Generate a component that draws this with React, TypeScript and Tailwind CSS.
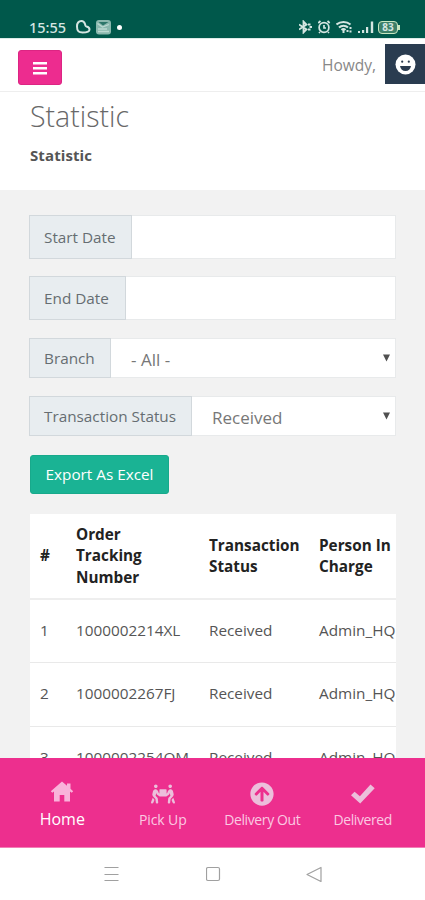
import React from "react";
import { FaArrowCircleUp, FaPeopleCarry } from "react-icons/fa";

const rows = [
  { id: 1, tracking: "1000002214XL", status: "Received", person: "Admin_HQ" },
  { id: 2, tracking: "1000002267FJ", status: "Received", person: "Admin_HQ" },
  { id: 3, tracking: "1000002254QM", status: "Received", person: "Admin_HQ" },
];

const StatusBar = () => (
  <div className="h-[38px] shrink-0 bg-[#00584b] flex items-end justify-between pl-[29px] pr-[25px] pb-[3px] text-[#d5e6e2]">
    <div className="flex items-center">
      <span className="w-[38px] font-['Noto_Sans','Open_Sans',sans-serif] text-[14.5px] leading-[15px] font-medium whitespace-nowrap">
        15:55
      </span>
      <svg className="ml-[7px]" width="17" height="16" viewBox="0 0 17 16" fill="none" stroke="currentColor" strokeWidth="2">
        <path d="M7.500 2C4.500 2 3 4 3 7.500C3 12 4.500 13.500 8.500 13.500C12.500 13.500 15.500 13 15.500 10.500C15.500 8.500 14.500 8 12.500 7.500C11 7 11.500 6.500 11 5C10.300 3 9.500 2 7.500 2Z" />
      </svg>
      <svg className="ml-[4px]" width="17" height="16" viewBox="0 0 17 16">
        <rect x="1" y="1" width="15" height="14.500" rx="3" fill="#8ab8ae" />
        <path d="M2.500 4.500L7.500 8L14 5.500M3 12.500H14M3 10H12" stroke="#bcd9d2" strokeWidth="1.300" fill="none" />
        <path d="M3.500 3H13.500L8 6.500Z" fill="#2c7569" />
      </svg>
      <span className="ml-[5px] size-[5px] rounded-full bg-white" />
    </div>
    <div className="flex items-center gap-[5px] pb-px">
      <svg className="-mr-px" width="15" height="14" viewBox="0 0 15 14" fill="none" stroke="currentColor" strokeWidth="1.800">
        <path d="M0 4.500L7.500 9.500L4.500 12.500V1.500L7.500 4.500L0 9.500" />
        <path d="M9 4.500H11.500M9 9.500H11.500M10.500 7H13" strokeWidth="2" />
      </svg>
      <svg className="-mr-px" width="14" height="14" viewBox="0 0 14 14" fill="none" stroke="currentColor" strokeWidth="1.700">
        <circle cx="6" cy="7.500" r="4.900" />
        <path d="M6 5V8H8M0.300 3L2.500 1M11.700 3L9.500 1M2 12L1 13M10 12L11 13" />
      </svg>
      <svg width="17" height="14" viewBox="0 0 17 14" fill="none" stroke="currentColor" strokeWidth="2">
        <path d="M0.500 4.500C4.500 1 10.500 1 14.500 4.500M3 7.500C5.500 5 9.500 5 12 7.500M5.500 10C7 8.500 8 8.500 9.500 10" />
        <path d="M7.500 10V13M11.500 10V12M14.500 7V9M14.500 10.500V12.500" />
      </svg>
      <svg width="17" height="14" viewBox="0 0 17 14" fill="currentColor">
        <path d="M0 11h2v2H0zM4 10h2.200V13H4zM8 7h2.200v6H8zM12.800 1.500h2.400v11.500h-2.400z" />
      </svg>
      <div className="relative -ml-[2px] mr-[2px] flex h-[13px] w-[20px] items-center justify-center rounded-[4px] border-[1.5px] border-[#c8e6c0] bg-[#3d8069] font-['Open_Sans',sans-serif] text-[10px] font-bold leading-none">
        83
        <span className="absolute -right-[3px] top-[3px] h-[5px] w-[2px] bg-[#c8e6c0]" />
      </div>
    </div>
  </div>
);

const Navbar = () => (
  <div className="h-[54px] shrink-0 bg-white border-t border-t-[#dcebe8] border-b border-b-[#eeeeee] flex justify-between">
    <button className="mt-[11px] ml-[18px] w-[44px] h-[35px] rounded-[3px] bg-[#ed2c8f] border border-[#dc2583] text-white flex items-center justify-center">
      <svg width="14" height="14" viewBox="0 0 14 14" fill="currentColor">
        <path d="M0 1h14v2.500H0zM0 6h14v2.500H0zM0 11h14v2.500H0z" />
      </svg>
    </button>
    <div className="flex">
      <span className="mt-[15px] mr-[9px] text-[15.5px] leading-[22px] text-[#888888]">Howdy,</span>
      <div className="mt-[5px] size-[40px] bg-[#2a3c50] flex items-center justify-center">
        <svg width="21" height="21" viewBox="0 0 21 21">
          <circle cx="10.500" cy="10.500" r="10" fill="#fff" />
          <circle cx="7.200" cy="7.700" r="1.100" fill="#2a3c50" />
          <circle cx="13.800" cy="7.700" r="1.100" fill="#2a3c50" />
          <path d="M5 12H16C15.500 15 13.500 17 10.500 17C7.500 17 5.500 15 5 12Z" fill="#2a3c50" />
        </svg>
      </div>
    </div>
  </div>
);

type FieldProps = {
  label: string;
  value?: string;
  select?: boolean;
  labelClass: string;
  className: string;
  valueClass?: string;
};

const Field = ({ label, value, select, labelClass, className, valueClass }: FieldProps) => (
  <div className={`flex ${className}`}>
    <div
      className={`shrink-0 border border-[#d2d8dc] bg-[#e8edf0] pl-[14px] flex items-center text-[15.3px] text-[#666d72] whitespace-nowrap ${labelClass}`}
    >
      {label}
    </div>
    <div className="flex-1 flex items-center justify-between bg-white border-y border-r border-[#e8eaeb]">
      <span className={`text-[17px] leading-5 text-[#777777] ${valueClass ?? ""}`}>{value}</span>
      {select && (
        <svg className="mr-[5px] mb-px" width="7" height="8" viewBox="0 0 7 8">
          <path d="M0 0.500H7L3.500 7.500Z" fill="#505050" />
        </svg>
      )}
    </div>
  </div>
);

const Table = () => (
  <div className="mt-[20px] ml-[30px] w-[366px] overflow-hidden bg-white">
    <table className="w-[366px] table-fixed border-collapse text-left text-[15.3px] whitespace-nowrap">
      <colgroup>
        <col className="w-[37px]" />
        <col className="w-[132px]" />
        <col className="w-[111px]" />
        <col className="w-[86px]" />
      </colgroup>
      <thead>
        <tr className="h-[85px] border-b-2 border-[#eeeeee] text-[#222222] leading-[21.5px]">
          <th className="pl-[10px] font-bold">#</th>
          <th className="pl-[9px] font-bold">
            Order
            <br />
            Tracking
            <br />
            Number
          </th>
          <th className="pl-[10px] font-bold">
            Transaction
            <br />
            Status
          </th>
          <th className="pl-[9px] font-bold">
            Person In
            <br />
            Charge
          </th>
        </tr>
      </thead>
      <tbody>
        {rows.map((row) => (
          <tr key={row.id} className="h-[63.5px] border-b border-[#e9e9e9] text-[#555555]">
            <td className="pl-[10px] pb-px">{row.id}</td>
            <td className="pl-[9px] pb-px">{row.tracking}</td>
            <td className="pl-[10px] pb-px">{row.status}</td>
            <td className="pl-[9px] pb-px">{row.person}</td>
          </tr>
        ))}
      </tbody>
    </table>
  </div>
);

const BottomNav = () => (
  <div className="h-[90px] shrink-0 bg-[#ed2f8e] border-b border-[#f17fb6] pl-[12px] pr-[11px] flex text-[#fbc9e2] text-[14px] leading-5 tracking-[-0.4px] whitespace-nowrap">
    <div className="w-[101px] flex flex-col items-center pt-[22px]">
      <svg width="24" height="24" viewBox="0 0 24 24" fill="#f9b3da">
        <path d="M12 1.500L0.800 11.200L2.300 12.800L4 11.500V21.500H9.700V15H14.300V21.500H20V11.500L21.700 12.800L23.200 11.200L20.500 8.800V3.500H17V5.800Z" />
      </svg>
      <span className="mt-[5px] text-[16px] font-medium tracking-normal text-white">Home</span>
    </div>
    <div className="w-[101px] flex flex-col items-center pt-[24px]">
      <FaPeopleCarry size={24} color="#ecbfdb" />
      <span className="mt-[4px] tracking-[-0.1px]">Pick Up</span>
    </div>
    <div className="w-[99px] flex flex-col items-center pt-[24px]">
      <FaArrowCircleUp size={24} color="#ecbfdb" />
      <span className="mt-[4px]">Delivery Out</span>
    </div>
    <div className="w-[103px] flex flex-col items-center pt-[24px]">
      <svg width="24" height="24" viewBox="0 0 24 24" fill="#ecbfdb">
        <path d="M0 13.300L3.600 9.800L8.900 14.300L19.500 2.500L23.700 6.300L9.200 21.500Z" />
      </svg>
      <span className="mt-[4px]">Delivered</span>
    </div>
  </div>
);

const SystemNav = () => (
  <div className="h-[52px] shrink-0 bg-white flex items-center pl-[104px] text-[#a0a0a0]">
    <svg width="15" height="16" viewBox="0 0 15 16" fill="none" stroke="currentColor" strokeWidth="1.200">
      <path d="M0.500 1.500H14.500M0.500 8.500H14.500M0.500 14.500H14.500" />
    </svg>
    <svg className="ml-[87px]" width="15" height="16" viewBox="0 0 15 16" fill="none" stroke="currentColor" strokeWidth="1.200">
      <rect x="0.500" y="1.500" width="13" height="13" rx="1.500" />
    </svg>
    <svg className="ml-[85px]" width="17" height="16" viewBox="0 0 17 16" fill="none" stroke="currentColor" strokeWidth="1.200">
      <path d="M1 8.500L15 1.500V15.500Z" strokeLinejoin="round" />
    </svg>
  </div>
);

const App = () => {
  return (
    <div className="h-[900px] w-[425px] overflow-hidden bg-[#f2f2f2] flex flex-col font-['Open_Sans','Noto_Sans',sans-serif]">
      <StatusBar />
      <Navbar />
      <div className="h-[98px] shrink-0 bg-white pl-[30px]">
        <h1 className="pt-[7px] text-[28.5px] leading-[34px] font-light text-[#686868]">Statistic</h1>
        <p className="mt-[12px] text-[15px] leading-5 font-bold text-[#555555] tracking-[0.1px]">Statistic</p>
      </div>
      <div className="h-[568px] shrink-0 overflow-hidden">
        <div className="pt-[25px] pl-[29px] pr-[29px]">
          <Field label="Start Date" labelClass="w-[103px]" className="h-[44px]" />
          <Field label="End Date" labelClass="w-[97px]" className="mt-[17px] h-[44px]" />
          <Field label="Branch" value="- All -" select labelClass="w-[82px]" className="mt-[18px] h-[40px]" valueClass="ml-[20px] mt-[4px]" />
          <Field
            label="Transaction Status"
            value="Received"
            select
            labelClass="w-[163px]"
            className="mt-[18px] h-[40px]"
            valueClass="ml-[20px] mt-[4px]"
          />
        </div>
        <button className="mt-[19px] ml-[30px] h-[39px] w-[139px] rounded-[3px] bg-[#1ab394] border border-[#18a98b] text-[15.3px] text-white whitespace-nowrap flex items-center justify-center">
          Export As Excel
        </button>
        <Table />
      </div>
      <BottomNav />
      <SystemNav />
    </div>
  );
};

export default App;
